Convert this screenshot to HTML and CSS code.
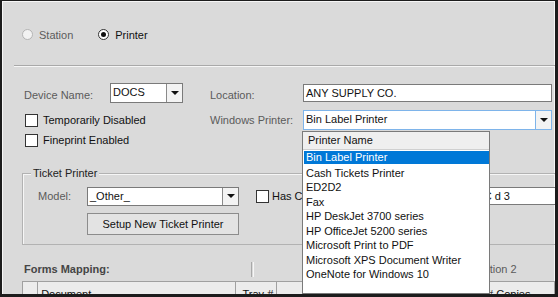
FILE: index.html
```html
<!DOCTYPE html>
<html lang="en">
<head>
    <meta charset="UTF-8">
    <title>Printer Setup</title>
    <link rel="stylesheet" href="styles.css">
</head>
<body>
    <div class="window">
        <div class="mode-row">
            <label class="radio-label muted"><span class="radio"></span>Station</label>
            <label class="radio-label"><span class="radio checked"></span>Printer</label>
        </div>
        <div class="divider"></div>

        <div class="device-grid">
            <span class="field-label top">Device Name:</span>
            <div class="combo small">
                <span class="combo-text">DOCS</span>
                <span class="combo-btn"><i class="arrow"></i></span>
            </div>
            <span class="field-label top">Location:</span>
            <div class="textbox">ANY SUPPLY CO.</div>

            <label class="check-label span2"><span class="check"></span>Temporarily Disabled</label>
            <span class="field-label">Windows Printer:</span>
            <div class="combo focused">
                <span class="combo-text">Bin Label Printer</span>
                <span class="combo-btn"><i class="arrow"></i></span>
            </div>

            <label class="check-label span2 last"><span class="check"></span>Fineprint Enabled</label>
        </div>

        <div class="group">
            <span class="group-title">Ticket Printer</span>
            <div class="group-row">
                <span class="model-label">Model:</span>
                <div class="combo model">
                    <span class="combo-text">_Other_</span>
                    <span class="combo-btn"><i class="arrow"></i></span>
                </div>
                <label class="check-label cut"><span class="check"></span>Has Cut Command:</label>
                <div class="textbox cut-cmd">ESC d 3</div>
            </div>
            <button class="setup-btn">Setup New Ticket Printer</button>
        </div>

        <div class="forms-row">
            <span class="forms-title">Forms Mapping:</span>
            <span class="vsep"></span>
            <span class="option-label">Option 2</span>
        </div>

        <div class="grid-head">
            <span class="col col-sel"></span>
            <span class="col col-doc">Document</span>
            <span class="col col-tray">Tray #</span>
            <span class="col col-bin">Bin Num #</span>
            <span class="col col-copies"># Copies</span>
        </div>

        <div class="printer-list">
            <div class="list-head">Printer Name</div>
            <div class="list-body">
                <div class="list-item selected">Bin Label Printer</div>
                <div class="list-item">Cash Tickets Printer</div>
                <div class="list-item">ED2D2</div>
                <div class="list-item">Fax</div>
                <div class="list-item">HP DeskJet 3700 series</div>
                <div class="list-item">HP OfficeJet 5200 series</div>
                <div class="list-item">Microsoft Print to PDF</div>
                <div class="list-item">Microsoft XPS Document Writer</div>
                <div class="list-item">OneNote for Windows 10</div>
            </div>
        </div>
    </div>
</body>
</html>
```

FILE: styles.css
```css
body {
    margin: 0;
    font-family: "Liberation Sans", Arial, sans-serif;
    font-size: 11px;
    color: #111;
}
.window {
    position: relative;
    width: 558px;
    height: 297px;
    box-sizing: border-box;
    overflow: hidden;
    background: #dadada;
    border-style: solid;
    border-color: #1c1c1c;
    border-width: 1px 3px 3px 2px;
    box-shadow: inset 1px 1px 0 #f6f6f6, inset -1px 0 0 #f6f6f6;
}
.mode-row {
    display: flex;
    align-items: center;
    height: 11px;
    padding: 28px 0 0 20px;
}
.radio-label {
    display: flex;
    align-items: center;
    gap: 6px;
    margin-right: 25px;
}
.muted {
    color: #5c5c5c;
}
.radio {
    position: relative;
    width: 11px;
    height: 11px;
    box-sizing: border-box;
    border: 1px solid #b4b4b4;
    border-radius: 50%;
    background: #f2f2f2;
}
.radio.checked {
    border-color: #333;
    background: #fff;
}
.radio.checked::after {
    content: "";
    position: absolute;
    left: 2px;
    top: 2px;
    width: 5px;
    height: 5px;
    border-radius: 50%;
    background: #111;
}
.divider {
    margin: 25px 0 0 12px;
    border-top: 1px solid #a9a9a9;
    border-bottom: 1px solid #f6f6f6;
}
.device-grid {
    display: grid;
    grid-template-columns: 86px 100px 93px 249px;
    grid-template-rows: 27px 23px 14px;
    align-items: start;
    margin-top: 16px;
    padding-left: 22px;
}
.field-label {
    line-height: 20px;
    color: #5a5a5a;
}
.field-label.top {
    padding-top: 2px;
    line-height: 20px;
}
.combo {
    display: flex;
    height: 20px;
    box-sizing: border-box;
    border: 1px solid #7a7a7a;
    background: #fff;
}
.combo.small {
    width: 73px;
}
.combo.focused {
    border-color: #7eb4ea;
}
.combo.model {
    width: 152px;
    height: 19px;
}
.combo-text {
    flex: 1;
    padding-left: 2px;
    line-height: 17px;
}
.combo-btn {
    display: flex;
    align-items: center;
    justify-content: center;
    width: 15px;
    border-left: 1px solid #8a8a8a;
    background: #f3f3f3;
}
.combo.focused .combo-btn {
    border-left-color: #7eb4ea;
}
.arrow {
    width: 0;
    height: 0;
    border-left: 4px solid transparent;
    border-right: 4px solid transparent;
    border-top: 4px solid #111;
}
.textbox {
    height: 18px;
    margin-top: 1px;
    box-sizing: border-box;
    border: 1px solid #7a7a7a;
    background: #fff;
    padding-left: 2px;
    line-height: 16px;
}
.check-label {
    display: flex;
    align-items: center;
    gap: 5px;
    height: 20px;
    padding-left: 1px;
}
.check-label.last {
    height: 14px;
}
.span2 {
    grid-column: 1 / 3;
}
.check {
    width: 13px;
    height: 13px;
    box-sizing: border-box;
    border: 1px solid #333;
    background: #fff;
}
.group {
    width: 600px;
    margin: 26px 0 0 20px;
    padding-bottom: 9px;
    border: 1px solid #b2b2b2;
    box-shadow: inset 1px 1px 0 #f6f6f6;
}
.group-title {
    display: table;
    margin: -8px 0 0 8px;
    padding: 0 2px;
    line-height: 14px;
    background: #dadada;
    color: #222;
}
.group-row {
    display: flex;
    align-items: center;
    margin-top: 6px;
    padding-left: 15px;
}
.group-row > * {
    flex-shrink: 0;
}
.model-label {
    width: 49px;
    color: #5a5a5a;
}
.check-label.cut {
    width: 209px;
    margin-left: 16px;
    gap: 3px;
}
.textbox.cut-cmd {
    width: 200px;
    margin-top: 0;
    padding-left: 3px;
}
.setup-btn {
    display: block;
    width: 152px;
    height: 22px;
    margin: 7px 0 0 64px;
    border: 1px solid #8c8c8c;
    background: #e3e3e3;
    font-family: inherit;
    font-size: 11px;
    color: #111;
}
.forms-row {
    display: flex;
    align-items: center;
    height: 16px;
    margin-top: 16px;
    padding-left: 22px;
}
.forms-title {
    width: 227px;
    font-weight: bold;
    color: #454545;
}
.vsep {
    width: 1px;
    height: 15px;
    border-left: 1px solid #a9a9a9;
    border-right: 1px solid #f6f6f6;
}
.option-label {
    margin-left: 221px;
    color: #5a5a5a;
}
.grid-head {
    display: flex;
    height: 24px;
    margin: 4px 0 0 20px;
    border-top: 1px solid #a0a0a0;
    border-left: 1px solid #a0a0a0;
    background: #ececec;
}
.col {
    box-sizing: border-box;
    padding-top: 6px;
    line-height: 13px;
    border-right: 1px solid #a0a0a0;
    white-space: nowrap;
    overflow: hidden;
}
.col-sel {
    width: 16px;
}
.col-doc {
    width: 209px;
    padding-left: 3px;
}
.col-tray {
    width: 44px;
    padding-left: 7px;
}
.col-bin {
    width: 213px;
    padding-right: 11px;
    text-align: right;
}
.col-copies {
    width: 80px;
    padding-left: 8px;
}
.printer-list {
    position: absolute;
    left: 300px;
    top: 130px;
    width: 188px;
    height: 163px;
    box-sizing: border-box;
    border: 1px solid #7a7a7a;
    background: #fff;
}
.list-head {
    height: 17px;
    padding-left: 5px;
    line-height: 17px;
    background: #efefef;
    border-bottom: 1px solid #d0d0d0;
    color: #111;
}
.list-body {
    padding-top: 1px;
}
.list-item {
    height: 14.5px;
    padding-left: 3px;
    line-height: 14px;
}
.list-item.selected {
    margin-left: 1px;
    padding-left: 2px;
    height: 13px;
    line-height: 13px;
    margin-bottom: 1.5px;
    background: #0078d7;
    color: #fff;
}
```
